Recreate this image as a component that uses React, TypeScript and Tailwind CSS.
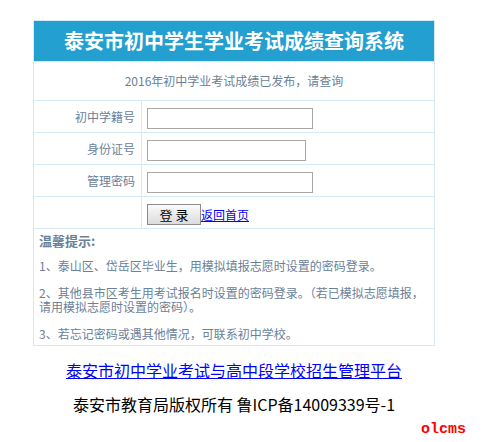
const labelCls = 'w-[108px] border border-[#d5eaf5] pr-[6px] text-right text-[12px] text-[#6a8198]';
const cellCls = 'border border-[#d5eaf5] pl-[5px]';

function Field({ label, width, type = 'text' }: { label: string; width: string; type?: string }) {
  return (
    <tr className="h-[32px]">
      <td className={labelCls}>{label}</td>
      <td className={cellCls}>
        <input
          type={type}
          className={`${width} h-[21px] border border-[#a6a6a6] bg-white align-middle outline-none`}
        />
      </td>
    </tr>
  );
}

export default function App() {
  return (
    <div
      className="min-h-[442px] w-[498px] bg-white pt-[20px]"
      style={{ fontFamily: '"Noto Sans CJK SC", "Noto Sans", sans-serif' }}
    >
      <table className="ml-[33px] w-[402px] border-collapse">
        <tbody>
          {/* 标题 */}
          <tr className="h-[41px]">
            <td
              colSpan={2}
              className="border border-[#d5eaf5] bg-[#23a0d0] text-center text-[20px] font-bold text-white"
            >
              泰安市初中学生学业考试成绩查询系统
            </td>
          </tr>
          <tr className="h-[39px]">
            <td colSpan={2} className="border border-[#d5eaf5] text-center text-[12px] text-[#6a8198]">
              2016年初中学业考试成绩已发布，请查询
            </td>
          </tr>

          <Field label="初中学籍号" width="w-[166px]" />
          <Field label="身份证号" width="w-[159px]" />
          <Field label="管理密码" width="w-[166px]" type="password" />

          <tr className="h-[32px]">
            <td className={labelCls}></td>
            <td className={cellCls}>
              <button className="h-[21px] w-[54px] border border-[#8c8c8c] bg-gradient-to-b from-[#fafafa] to-[#dcdcdc] align-middle text-[13px] leading-none text-black">
                登 录
              </button>
              <a href="#" className="align-middle text-[12px] text-[#0000ff] underline">
                返回首页
              </a>
            </td>
          </tr>

          {/* 温馨提示 */}
          <tr>
            <td
              colSpan={2}
              className="border border-[#d5eaf5] px-[5px] pt-[5px] pb-[4px] align-top text-[12px] leading-[14px] text-[#6a8198]"
            >
              <p className="font-bold text-[13px]">温馨提示:</p>
              <p className="mt-[11px]">1、泰山区、岱岳区毕业生，用模拟填报志愿时设置的密码登录。</p>
              <p className="mt-[13px]">
                2、其他县市区考生用考试报名时设置的密码登录。（若已模拟志愿填报，请用模拟志愿时设置的密码）。
              </p>
              <p className="mt-[13px]">3、若忘记密码或遇其他情况，可联系初中学校。</p>
            </td>
          </tr>
        </tbody>
      </table>

      <div className="mt-[14px] flex w-[468px] justify-center">
        <a href="#" className="text-[16px] leading-[20px] text-[#0000ff] underline">
          泰安市初中学业考试与高中段学校招生管理平台
        </a>
      </div>
      <div className="mt-[14px] flex w-[468px] justify-center text-[16px] leading-[20px] text-black">
        泰安市教育局版权所有 鲁ICP备14009339号-1
      </div>
      <div className="mt-[7px] flex w-[466px] justify-end">
        <span className="text-[15px] font-bold leading-[18px] text-[#ff0000]" style={{ fontFamily: '"Liberation Mono", monospace' }}>
          olcms
        </span>
      </div>
    </div>
  );
}
